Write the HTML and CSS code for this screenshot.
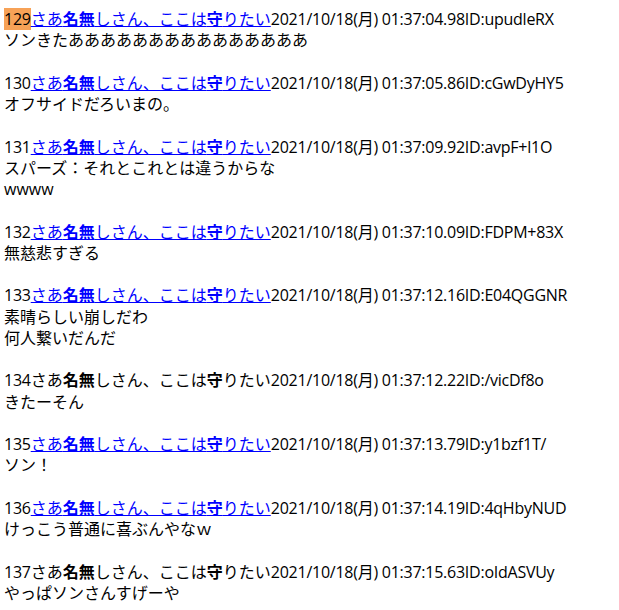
FILE: index.html
```html
<!DOCTYPE html>
<html lang="ja">
<head>
    <meta charset="UTF-8">
    <title>スレッド</title>
    <link rel="stylesheet" href="styles.css">
</head>
<body>

    <dl class="thread">
        <dt class="res"><span class="num target">129</span><a href="mailto:sage" class="name">さあ<b>名無</b>しさん、ここは<b>守</b>りたい</a><span class="date">2021/10/18(月) 01:37:04.98</span><span class="uid">ID:upudleRX</span></dt>
        <dd class="msg">ソンきたあああああああああああああああ</dd>

        <dt class="res"><span class="num">130</span><a href="mailto:sage" class="name">さあ<b>名無</b>しさん、ここは<b>守</b>りたい</a><span class="date">2021/10/18(月) 01:37:05.86</span><span class="uid">ID:cGwDyHY5</span></dt>
        <dd class="msg">オフサイドだろいまの。</dd>

        <dt class="res"><span class="num">131</span><a href="mailto:sage" class="name">さあ<b>名無</b>しさん、ここは<b>守</b>りたい</a><span class="date">2021/10/18(月) 01:37:09.92</span><span class="uid">ID:avpF+l1O</span></dt>
        <dd class="msg">スパーズ：それとこれとは違うからな<br>wwww</dd>

        <dt class="res"><span class="num">132</span><a href="mailto:sage" class="name">さあ<b>名無</b>しさん、ここは<b>守</b>りたい</a><span class="date">2021/10/18(月) 01:37:10.09</span><span class="uid">ID:FDPM+83X</span></dt>
        <dd class="msg">無慈悲すぎる</dd>

        <dt class="res"><span class="num">133</span><a href="mailto:sage" class="name">さあ<b>名無</b>しさん、ここは<b>守</b>りたい</a><span class="date">2021/10/18(月) 01:37:12.16</span><span class="uid">ID:E04QGGNR</span></dt>
        <dd class="msg">素晴らしい崩しだわ<br>何人繋いだんだ</dd>

        <dt class="res"><span class="num">134</span><span class="name">さあ<b>名無</b>しさん、ここは<b>守</b>りたい</span><span class="date">2021/10/18(月) 01:37:12.22</span><span class="uid">ID:/vicDf8o</span></dt>
        <dd class="msg">きたーそん</dd>

        <dt class="res"><span class="num">135</span><a href="mailto:sage" class="name">さあ<b>名無</b>しさん、ここは<b>守</b>りたい</a><span class="date">2021/10/18(月) 01:37:13.79</span><span class="uid">ID:y1bzf1T/</span></dt>
        <dd class="msg">ソン！</dd>

        <dt class="res"><span class="num">136</span><a href="mailto:sage" class="name">さあ<b>名無</b>しさん、ここは<b>守</b>りたい</a><span class="date">2021/10/18(月) 01:37:14.19</span><span class="uid">ID:4qHbyNUD</span></dt>
        <dd class="msg">けっこう普通に喜ぶんやなｗ</dd>

        <dt class="res"><span class="num">137</span><span class="name">さあ<b>名無</b>しさん、ここは<b>守</b>りたい</span><span class="date">2021/10/18(月) 01:37:15.63</span><span class="uid">ID:oIdASVUy</span></dt>
        <dd class="msg">やっぱソンさんすげーや</dd>
    </dl>

</body>
</html>
```

FILE: styles.css
```css
body {
    margin: 0;
    padding: 9px 4px;
    background: #ffffff;
    color: #000000;
    font-family: "Open Sans", "Noto Sans CJK JP", sans-serif;
    font-size: 16px;
    line-height: 21.25px;
}

.thread {
    margin: 0;
}

.res {
    margin: 0;
    white-space: nowrap;
}

.num, .date, .uid {
    letter-spacing: -0.25px;
}

.num.target {
    background: #f7a257;
}

.name {
    color: #000000;
    text-decoration: none;
}

a.name {
    color: #0000ff;
    text-decoration: underline;
}

.name b {
    font-weight: bold;
}

.msg {
    margin: 0 0 21.25px 0;
}
```
